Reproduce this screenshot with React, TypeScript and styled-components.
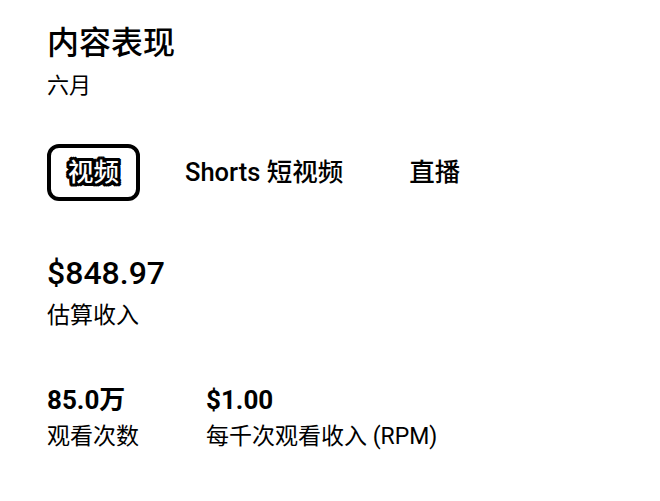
import React from "react";
import styled, { createGlobalStyle } from "styled-components";

const Global = createGlobalStyle`
  html, body { margin: 0; padding: 0; background: #fff; }
  body { font-family: Roboto, "Noto Sans CJK SC", sans-serif; color: #000; }
`;

const Page = styled.div`
  padding: 23px 0 0 47px;
  display: flex;
  flex-direction: column;
  align-items: flex-start;
`;

const Title = styled.h1`
  margin: 0;
  font-size: 32px;
  font-weight: 500;
  line-height: 40px;
`;

const Subtitle = styled.div`
  margin-top: 9px;
  font-size: 22px;
  line-height: 28px;
`;

const Tabs = styled.div`
  margin-top: 44px;
  display: flex;
  align-items: center;
  gap: 24px;
`;

const Tab = styled.div<{ $active?: boolean }>`
  padding: 9px 17px;
  border: 4px solid ${(p) => (p.$active ? "#000" : "transparent")};
  border-radius: 12px;
  font-size: 25.5px;
  font-weight: 500;
  line-height: 31px;
  color: ${(p) => (p.$active ? "#fff" : "#000")};
  text-shadow: ${(p) =>
    p.$active
      ? "3px 0 0 #000, -3px 0 0 #000, 0 3px 0 #000, 0 -3px 0 #000, 2px 2px 0 #000, -2px 2px 0 #000, 2px -2px 0 #000, -2px -2px 0 #000, 3px 2px 0 #000, -3px 2px 0 #000, 3px -2px 0 #000, -3px -2px 0 #000, 2px 3px 0 #000, -2px 3px 0 #000, 2px -3px 0 #000, -2px -3px 0 #000, 1px 0 0 #000, -1px 0 0 #000, 0 1px 0 #000, 0 -1px 0 #000"
      : "none"};
`;

const Metric = styled.div`
  display: flex;
  flex-direction: column;
`;

const BigValue = styled.div`
  font-size: 32px;
  font-weight: 500;
  line-height: 38px;
`;

const Value = styled.div`
  font-size: 26px;
  font-weight: 700;
  line-height: 32px;
`;

const Label = styled.div<{ $gap: number }>`
  margin-top: ${(p) => p.$gap}px;
  font-size: 23px;
  line-height: 28px;
`;

const Hero = styled(Metric)`
  margin-top: 53px;
`;

const Row = styled.div`
  margin-top: 54px;
  display: flex;
  gap: 67px;
`;

export default function App() {
  return (
    <>
      <Global />
      <Page>
        <Title>内容表现</Title>
        <Subtitle>六月</Subtitle>
        <Tabs>
          <Tab $active>视频</Tab>
          <Tab>Shorts 短视频</Tab>
          <Tab>直播</Tab>
        </Tabs>
        <Hero>
          <BigValue>$848.97</BigValue>
          <Label $gap={10}>估算收入</Label>
        </Hero>
        <Row>
          <Metric>
            <Value>85.0万</Value>
            <Label $gap={7}>观看次数</Label>
          </Metric>
          <Metric>
            <Value>$1.00</Value>
            <Label $gap={7}>每千次观看收入 (RPM)</Label>
          </Metric>
        </Row>
      </Page>
    </>
  );
}
